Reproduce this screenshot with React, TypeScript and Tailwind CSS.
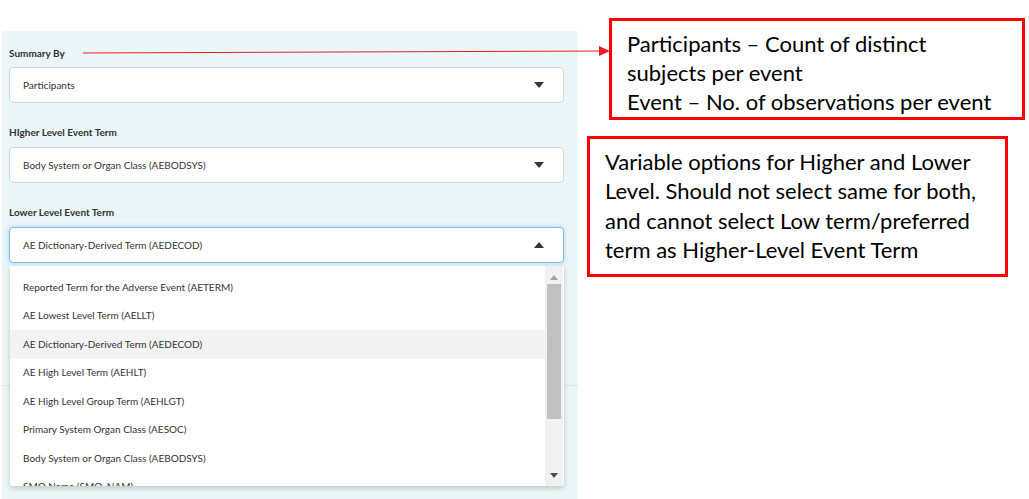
import React from "react";

const uiFont = { fontFamily: "Lato, 'Open Sans', sans-serif" };
const noteFont = { fontFamily: "Lato, 'Liberation Sans', sans-serif" };

const options = [
  "Reported Term for the Adverse Event (AETERM)",
  "AE Lowest Level Term (AELLT)",
  "AE Dictionary-Derived Term (AEDECOD)",
  "AE High Level Term (AEHLT)",
  "AE High Level Group Term (AEHLGT)",
  "Primary System Organ Class (AESOC)",
  "Body System or Organ Class (AEBODSYS)",
  "SMQ Name (SMQ_NAM)",
];

const Caret = ({ up }: { up?: boolean }) => (
  <svg width="10" height="6" viewBox="0 0 10 6" className="mr-[19px]">
    <path d={up ? "M0 6 L5 0 L10 6 Z" : "M0 0 L10 0 L5 6 Z"} fill="#333" />
  </svg>
);

const Select = ({
  value,
  open,
}: {
  value: string;
  open?: boolean;
}) => (
  <div
    className={
      "flex h-[36px] w-[555px] items-center justify-between rounded-[4px] bg-white " +
      (open
        ? "border border-[#80bdf0] shadow-[0_0_4px_rgba(128,189,240,0.6)]"
        : "border border-[#d4d4d4]")
    }
  >
    <span className="pl-[13px] text-[10px] text-[#333]">{value}</span>
    <Caret up={open} />
  </div>
);

const Label = ({ children }: { children: React.ReactNode }) => (
  <div className="text-[10px] font-bold text-[#333]">{children}</div>
);

const Dropdown = () => (
  <div className="absolute left-[1px] top-[39px] flex h-[220px] w-[554px] overflow-hidden rounded-b-[3px] bg-white shadow-[0_2px_5px_rgba(0,0,0,0.2)]">
    <div className="flex-1 pt-[7px]">
      {options.map((o, i) => (
        <div
          key={o}
          className={
            "flex h-[28.5px] items-center pl-[13px] text-[10px] text-[#333] " +
            (i === 2 ? "bg-[#f3f3f3]" : "")
          }
        >
          {o}
        </div>
      ))}
    </div>
    <div className="flex w-[18px] flex-col items-center bg-[#f1f1f1] mr-[1px]">
      <svg width="8" height="5" viewBox="0 0 8 5" className="mt-[9px]">
        <path d="M0 5 L4 0 L8 5 Z" fill="#a3a3a3" />
      </svg>
      <div className="mt-[4px] h-[135px] w-[14px] bg-[#c1c1c1]" />
      <div className="flex-1" />
      <svg width="8" height="5" viewBox="0 0 8 5" className="mb-[8px]">
        <path d="M0 0 L8 0 L4 5 Z" fill="#505050" />
      </svg>
    </div>
  </div>
);

export default function App() {
  return (
    <div className="relative flex h-[499px] w-[1029px] overflow-hidden bg-white">
      {/* left form panel */}
      <div
        className="ml-[2px] mt-[31px] w-[576px] bg-[#eaf6f7] pl-[7px]"
        style={uiFont}
      >
        <div className="mt-[15px]">
          <Label>Summary By</Label>
        </div>
        <div className="mt-[6px]">
          <Select value="Participants" />
        </div>
        <div className="mt-[22px]">
          <Label>HIgher Level Event Term</Label>
        </div>
        <div className="mt-[7px]">
          <Select value="Body System or Organ Class (AEBODSYS)" />
        </div>
        <div className="mt-[22px]">
          <Label>Lower Level Event Term</Label>
        </div>
        <div className="relative mt-[7px]">
          <Select value="AE Dictionary-Derived Term (AEDECOD)" open />
          <Dropdown />
        </div>
        <div className="mt-[122px] -ml-[7px] border-t border-[#dfe6e8]" />
      </div>

      {/* annotation arrow */}
      <svg
        className="absolute left-0 top-0"
        width="1029"
        height="499"
        viewBox="0 0 1029 499"
      >
        <line x1="83" y1="53" x2="600" y2="51" stroke="#ee1c1c" strokeWidth="1" />
        <path d="M599 46 L610 51 L599 56 Z" fill="#ee1c1c" />
      </svg>

      {/* notes */}
      <div className="flex flex-col" style={noteFont}>
        <div className="ml-[31px] mt-[18px] h-[102px] w-[416px] overflow-hidden border-[3px] border-[#ff0000] bg-white pl-[15px] pt-[8px] text-[22px] leading-[29px] text-black">
          Participants – Count of distinct
          <br />
          subjects per event
          <br />
          Event – No. of observations per event
        </div>
        <div className="ml-[9px] mt-[16px] w-[421px] border-[3px] border-[#ff0000] bg-white pb-[10px] pl-[15px] pt-[8px] text-[22px] leading-[29.3px] text-black">
          Variable options for Higher and Lower
          <br />
          Level. Should not select same for both,
          <br />
          and cannot select Low term/preferred
          <br />
          term as Higher-Level Event Term
        </div>
      </div>
    </div>
  );
}
